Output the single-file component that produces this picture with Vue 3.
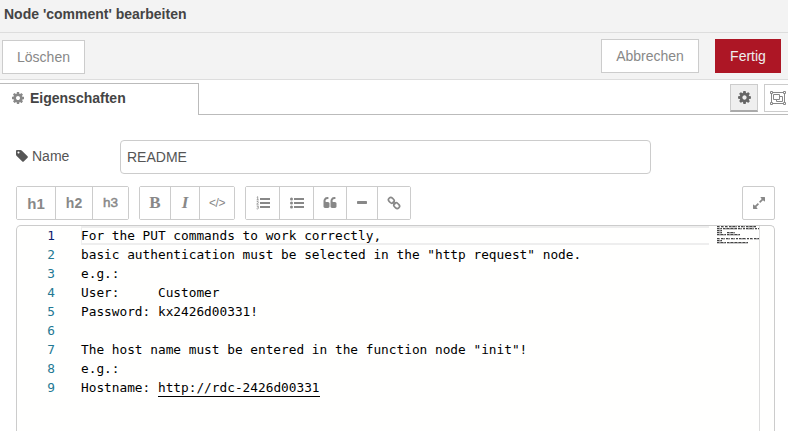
<script setup>
const lines = [
  'For the PUT commands to work correctly,',
  'basic authentication must be selected in the "http request" node.',
  'e.g.:',
  'User:     Customer',
  'Password: kx2426d00331!',
  '',
  'The host name must be entered in the function node "init"!',
  'e.g.:',
  'Hostname: http://rdc-2426d00331',
]

const rows = lines.map((text, i) => {
  const at = text.indexOf('http://')
  return {
    number: i + 1,
    text: at < 0 ? text : text.slice(0, at),
    link: at < 0 ? '' : text.slice(at),
  }
})

const minimapWords = lines.flatMap((text, row) =>
  [...text.matchAll(/\S+/g)].map((m) => ({ x: m.index, y: row * 2, width: m[0].length, key: `${row}-${m.index}` })),
)

const cog =
  'M1152 896q0-106-75-181t-181-75-181 75-75 181 75 181 181 75 181-75 75-181zm512-109v222q0 12-8 23t-20 13l-185 28q-19 54-39 91 35 50 107 138 10 12 10 25t-9 23q-27 37-99 108t-94 71q-12 0-26-9l-138-108q-44 23-91 38-16 136-29 186-7 28-36 28h-222q-14 0-24.5-8.500t-11.500-21.500l-28-184q-49-16-90-37l-141 107q-10 9-25 9-14 0-25-11-126-114-165-168-7-10-7-23 0-12 8-23 15-21 51-66.500t54-70.500q-27-50-41-99l-183-27q-13-2-21-12.500t-8-23.500v-222q0-12 8-23t19-13l186-28q14-46 39-92-40-57-107-138-10-12-10-24 0-10 9-23 26-36 98.500-107.500t94.500-71.500q13 0 26 10l138 107q44-23 91-38 16-136 29-186 7-28 36-28h222q14 0 24.500 8.500t11.500 21.500l28 184q49 16 90 37l142-107q9-9 24-9 13 0 25 10 129 119 165 170 7 8 7 22 0 12-8 23-15 21-51 66.500t-54 70.500q26 50 41 98l183 28q13 2 21 12.500t8 23.500z'
</script>

<template>
  <div class="tray">
    <header class="title">Node 'comment' bearbeiten</header>

    <div class="actions">
      <button class="btn delete">Löschen</button>
      <div class="confirm">
        <button class="btn cancel">Abbrechen</button>
        <button class="btn primary">Fertig</button>
      </div>
    </div>

    <div class="tabs">
      <div class="tab">
        <svg class="tab-icon" viewBox="0 0 1792 1792"><path :d="cog" /></svg>
        <span>Eigenschaften</span>
      </div>
      <div class="tab-tools">
        <button class="tool active">
          <svg width="15" height="15" viewBox="0 0 1792 1792"><path :d="cog" /></svg>
        </button>
        <button class="tool">
          <svg width="16" height="14" viewBox="0 0 16 14" class="outline">
            <path d="M3 1.500h10M3 12.500h10M1.500 3v8M14.500 3v8" />
            <path d="M.5.5h2v2h-2zM13.500.5h2v2h-2zM.5 11.500h2v2h-2zM13.500 11.500h2v2h-2z" />
            <path d="M3.500 3.500h6v5h-6zM9.500 5.500h3v5h-6v-2" />
          </svg>
        </button>
      </div>
    </div>

    <div class="form">
      <div class="name-row">
        <label class="name-label">
          <svg width="14" height="14" viewBox="0 0 1792 1792">
            <path d="M576 448q0-53-37.500-90.500t-90.500-37.500-90.500 37.500-37.500 90.500 37.500 90.500 90.500 37.500 90.500-37.500 37.500-90.500zm1067 576q0 53-37 90l-491 492q-39 37-91 37-53 0-90-37l-715-716q-38-37-64.500-101t-26.500-117v-416q0-52 38-90t90-38h416q53 0 117 26.500t102 64.500l715 714q37 39 37 91z" />
          </svg>
          <span>Name</span>
        </label>
        <div class="name-input">README</div>
      </div>

      <div class="toolbar">
        <div class="group headings">
          <button class="h1">h1</button>
          <button class="h2">h2</button>
          <button class="h3">h3</button>
        </div>
        <div class="group inline">
          <button class="bold">B</button>
          <button class="italic">I</button>
          <button class="code">&lt;/&gt;</button>
        </div>
        <div class="group blocks">
          <button>
            <svg width="14" height="14" viewBox="0 0 14 14">
              <path d="M4 2h10v2h-10zM4 6h10v2h-10zM4 10h10v2h-10z" />
              <path class="numerals" d="M.8 1.300l.9-.6v3.200M.6 3.900h2.200M.7 5.700q1.800-.8 1.800.5L.7 8.200h2M.7 10h1.800l-.9 1.200q1.100 0 1 1-.5 1.200-2 .5" />
            </svg>
          </button>
          <button>
            <svg width="14" height="14" viewBox="0 0 14 14">
              <path d="M4 2h10v2h-10zM4 6h10v2h-10zM4 10h10v2h-10z" />
              <circle cx="1.500" cy="3" r="1.500" /><circle cx="1.500" cy="7" r="1.500" /><circle cx="1.500" cy="11" r="1.500" />
            </svg>
          </button>
          <button>
            <svg width="14" height="14" viewBox="0 0 1792 1792">
              <path id="quote" d="M832 960v384q0 80-56 136t-136 56h-384q-80 0-136-56t-56-136v-704q0-104 40.500-198.500t109.500-163.500 163.500-109.500 198.500-40.500h64q26 0 45 19t19 45v128q0 26-19 45t-45 19h-64q-106 0-181 75t-75 181v32q0 40 28 68t68 28h224q80 0 136 56t56 136z" />
              <use href="#quote" x="896" />
            </svg>
          </button>
          <button>
            <svg width="12" height="14" viewBox="0 0 12 14"><rect x="1" y="5" width="10" height="3" rx=".7" /></svg>
          </button>
          <button>
            <svg width="14" height="14" viewBox="0 0 14 14" class="chain">
              <g transform="rotate(45 7 7)">
                <rect x=".2" y="4.700" width="6" height="4.600" rx="2.200" />
                <rect x="7.800" y="4.700" width="6" height="4.600" rx="2.200" />
                <path d="M5 7h4" />
              </g>
            </svg>
          </button>
        </div>
        <button class="expand">
          <svg width="14" height="14" viewBox="0 0 1792 1792">
            <path d="M883 1056q0 13-10 23l-332 332 144 144q19 19 19 45t-19 45-45 19h-448q-26 0-45-19t-19-45v-448q0-26 19-45t45-19 45 19l144 144 332-332q10-10 23-10t23 10l114 114q10 10 10 23zm781-864v448q0 26-19 45t-45 19-45-19l-144-144-332 332q-10 10-23 10t-23-10l-114-114q-10-10-10-23t10-23l332-332-144-144q-19-19-19-45t19-45 45-19h448q26 0 45 19t19 45z" />
          </svg>
        </button>
      </div>

      <div class="editor">
        <div class="code-area">
          <div v-for="row in rows" :key="row.number" class="row" :class="{ current: row.number === 1 }">
            <span class="number">{{ row.number }}</span>
            <span class="content">{{ row.text }}<span v-if="row.link" class="link">{{ row.link }}</span></span>
          </div>
        </div>
        <svg class="minimap" width="42" height="20" viewBox="0 0 42 20">
          <g v-for="w in minimapWords" :key="w.key">
            <rect :x="w.x" :y="w.y" :width="w.width" height="2" class="soft" />
            <path :d="`M${w.x} ${w.y + 0.5}h${w.width}`" class="glyphs" />
          </g>
        </svg>
        <div class="ruler"></div>
      </div>
    </div>
  </div>
</template>

<style>
body {
  margin: 0;
  overflow: hidden;
  background: #fff;
}
</style>

<style scoped>
.tray {
  width: 788px;
  height: 436px;
  overflow: hidden;
  font-family: "Liberation Sans", Arial, sans-serif;
  font-size: 14px;
  color: #555;
}
.tray * {
  box-sizing: border-box;
}
svg {
  display: block;
  flex: none;
  fill: currentColor;
}
button {
  display: flex;
  align-items: center;
  justify-content: center;
  margin: 0;
  padding: 0;
  border: 1px solid #ccc;
  background: #fff;
  color: #888;
  font: inherit;
}
.title {
  height: 33px;
  padding: 0 4px;
  border-bottom: 1px solid #ddd;
  background: #f3f3f3;
  color: #444;
  font-weight: bold;
  line-height: 29px;
}
.actions {
  display: flex;
  justify-content: space-between;
  height: 47px;
  padding: 6px 7px 0 2px;
  border-bottom: 1px solid #ddd;
  background: #f3f3f3;
}
.btn {
  height: 34px;
}
.delete {
  width: 83px;
  margin-top: 1px;
}
.confirm {
  display: flex;
  gap: 16px;
}
.cancel {
  width: 98px;
}
.primary {
  width: 66px;
  border-color: #ad1625;
  background: #ad1625;
  color: #eee;
}
.tabs {
  display: flex;
  height: 35px;
  padding-top: 3px;
}
.tab {
  display: flex;
  align-items: center;
  gap: 5px;
  width: 199px;
  padding-left: 11px;
  padding-bottom: 3px;
  border-top: 1px solid #bbb;
  border-right: 1px solid #bbb;
  color: #444;
  font-weight: bold;
}
.tab-icon {
  width: 14px;
  height: 14px;
  color: #888;
}
.tab-tools {
  display: flex;
  flex: 1;
  justify-content: flex-end;
  gap: 6px;
  margin-right: -4px;
  padding-top: 1px;
  border-bottom: 1px solid #bbb;
}
.tool {
  width: 28px;
  height: 28px;
}
.tool.active {
  border-bottom: 2px solid #aaa;
  background: #efefef;
  color: #666;
}
.outline {
  fill: none;
  stroke: currentColor;
}
.form {
  padding: 25px 13px 0 16px;
}
.name-row {
  display: flex;
}
.name-label {
  display: flex;
  align-items: center;
  gap: 3px;
  width: 105px;
  height: 32px;
  margin-left: -1px;
}
.name-input {
  width: 531px;
  height: 34px;
  padding-left: 6px;
  border: 1px solid #ccc;
  border-radius: 4px;
  line-height: 33px;
}
.toolbar {
  display: flex;
  gap: 10px;
  margin-top: 12px;
}
.group {
  display: grid;
  height: 34px;
  border: 1px solid #ccc;
  border-radius: 2px;
}
.group button {
  border: 0;
  border-left: 1px solid #ccc;
}
.group button:first-child {
  border-left: 0;
}
.group svg {
  margin-top: -1px;
}
.headings {
  grid-template-columns: 38px 37px 36px;
  font-weight: bold;
}
.inline {
  grid-template-columns: 30px 29px 35px;
}
.blocks {
  grid-template-columns: 33px 34px 33px 31px 33px;
}
.group .h1 {
  font-size: 15px;
}
.group .h3 {
  padding-bottom: 1px;
  font-size: 13.500px;
  font-weight: normal;
  -webkit-text-stroke: 0.5px #888;
}
.group .bold {
  font: bold 17px "Liberation Serif", serif;
}
.group .italic {
  font: italic bold 17px "Liberation Serif", serif;
}
.group .code {
  font-size: 12px;
  letter-spacing: -0.5px;
}
.numerals {
  fill: none;
  stroke: currentColor;
  stroke-width: 0.8;
}
.chain {
  fill: none;
  stroke: currentColor;
  stroke-width: 1.700;
}
.expand {
  width: 33px;
  height: 34px;
  margin-left: auto;
  border-radius: 2px;
}
.editor {
  display: flex;
  height: 206px;
  margin-top: 5px;
  border: 1px solid #ccc;
  border-bottom: 0;
  border-radius: 5px 5px 0 0;
  background: #fffffe;
  overflow: hidden;
}
.code-area {
  width: 692px;
  color: #000;
  font: 12.790px/19px "DejaVu Sans Mono", monospace;
}
.row {
  display: flex;
  height: 19px;
}
.number {
  width: 38px;
  margin-right: 26px;
  color: #237893;
  text-align: right;
}
.content {
  flex: 1;
  white-space: pre;
}
.current .number {
  color: #0b216f;
}
.current .content {
  box-shadow: inset 0 2px #eee, inset 0 -2px #eee, inset 1px 0 #eee;
}
.link {
  display: inline-block;
  height: 19px;
  border-bottom: 1px solid #000;
}
.minimap {
  margin-left: 8px;
}
.soft {
  fill: #ccc;
}
.glyphs {
  stroke: #444;
  stroke-width: 1;
  stroke-dasharray: 2 0.6 1 0.4;
}
.ruler {
  width: 15px;
  margin-left: auto;
  border-left: 1px solid #ddd;
}
</style>
